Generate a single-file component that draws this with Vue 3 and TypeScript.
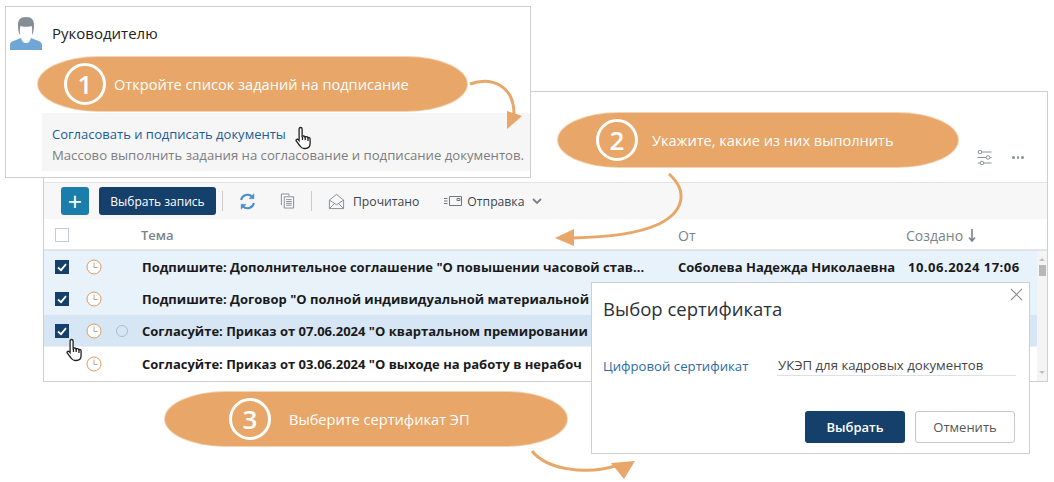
<script setup lang="ts">
interface Row { subject: string; from?: string; date?: string; state: string; dot?: boolean; checked: boolean }
const rows: Row[] = [
  { subject: 'Подпишите: Дополнительное соглашение "О повышении часовой став...', from: 'Соболева Надежда Николаевна', date: '10.06.2024 17:06', state: 'selected', checked: true },
  { subject: 'Подпишите: Договор "О полной индивидуальной материальной', state: 'selected', checked: true },
  { subject: 'Согласуйте: Приказ от 07.06.2024 "О квартальном премировании', state: 'active', dot: true, checked: true },
  { subject: 'Согласуйте: Приказ от 03.06.2024 "О выходе на работу в нерабоч', state: 'plain', checked: false },
]
const handPath = 'M5.500 1.500c1 0 1.600.7 1.600 1.600v7.200c.5-.4 2.600-.6 2.900.6.7-.5 2.400-.4 2.700.8.8-.4 2.400-.1 2.400 1.300v4.500c0 3-2 5-5 5H9c-2 0-3-1-4-2.500L1.200 15c-.7-1.100.8-2.400 1.900-1.400l1 1V3.100c0-.9.500-1.600 1.400-1.600z'
</script>

<template>
  <div class="canvas">
    <section class="win main">
      <div class="top-actions">
        <svg width="15" height="15" viewBox="0 0 15 15" fill="none" stroke="#8a949c" stroke-width="1">
          <path d="M1 2h13.500M.5 7.500h14M1 13h13.500" />
          <circle cx="3" cy="2" r="1.800" fill="#fff" />
          <circle cx="11" cy="7.500" r="1.800" fill="#fff" />
          <circle cx="5" cy="13" r="1.800" fill="#fff" />
        </svg>
        <span class="dots"><i></i><i></i><i></i></span>
      </div>
      <div class="toolbar">
        <button class="plus">+</button>
        <button class="pick">Выбрать запись</button>
        <span class="sep"></span>
        <svg class="refresh" width="17" height="17" viewBox="0 0 18 18" fill="none" stroke="#4a8fd0" stroke-width="2.200">
          <path d="M2.200 7.500A7 7 0 0 1 14 4" />
          <path d="M15.800 10.500A7 7 0 0 1 4 14" />
          <path d="M15.800 0.800v5.200h-5.200L15.800 .8z" fill="#4a8fd0" stroke-width="0.500" />
          <path d="M2.200 17.200v-5.200h5.200L2.200 17.200z" fill="#4a8fd0" stroke-width="0.500" />
        </svg>
        <svg class="copy" width="15" height="18" viewBox="0 0 16 18" fill="#fff" stroke="#7d878f" stroke-width="1">
          <path d="M1.500 13.500v-12h8v2" />
          <path d="M4.500 4.500h10v12h-10z" />
          <path d="M6.500 7.500h6M6.500 9.500h6M6.500 11.500h6M6.500 13.500h6" />
        </svg>
        <span class="sep second"></span>
        <svg class="env" width="17" height="17" viewBox="0 0 18 18" fill="none" stroke="#848c94" stroke-width="1">
          <path d="M1.500 7.500 9 1.500l7.500 6v9h-15z" />
          <path d="M1.500 7.500 9 12.500l7.500-5M1.500 16.500 7 11M16.500 16.500 11 11" />
        </svg>
        <span class="tool-label">Прочитано</span>
        <svg class="send" width="18" height="12" viewBox="0 0 18 12" fill="none" stroke="#6f7880" stroke-width="1">
          <path d="M5.500 1.500h12v9h-12zM0 3.500h3.500M0 6h3.500M0 8.500h3.500" />
          <path d="M13 3.500h3v2h-3z" />
        </svg>
        <span class="tool-label near">Отправка</span>
        <svg class="chev" width="10" height="7" viewBox="0 0 10 7" fill="none" stroke="#77808a" stroke-width="1.800"><path d="m1 1 4 4 4-4" /></svg>
      </div>
      <div class="grid-row head">
        <span class="cb"></span>
        <span></span>
        <span></span>
        <span class="theme">Тема</span>
        <span class="light">От</span>
        <span class="light created">Создано
          <svg width="8" height="13" viewBox="0 0 8 13" fill="none" stroke="#7b838a" stroke-width="1.600"><path d="M4 0v11M1 8.500 4 12l3-3.500" /></svg>
        </span>
      </div>
      <div class="body">
        <div class="list">
          <div v-for="r in rows" :key="r.subject" class="grid-row item" :class="r.state">
            <span v-if="r.checked" class="cb on">
              <svg width="14" height="14" viewBox="0 0 14 14" fill="none" stroke="#fff" stroke-width="1.800"><path d="m3 7.500 3 2.700 5-6" /></svg>
            </span>
            <span v-else></span>
            <svg width="16" height="16" viewBox="0 0 16 16" fill="none" stroke="#e09a5e" stroke-width="1">
              <circle cx="8" cy="8" r="7" fill="#fff" />
              <path d="M8 3.500V8.500h3.500" stroke="#a8a8a8" />
            </svg>
            <i v-if="r.dot" class="dot"></i>
            <span v-else></span>
            <span class="subject">{{ r.subject }}</span>
            <span class="bold">{{ r.from }}</span>
            <span class="bold date">{{ r.date }}</span>
          </div>
        </div>
        <div class="scroll">
          <span class="up"></span>
          <span class="thumb"></span>
          <span class="down"></span>
        </div>
      </div>
    </section>

    <section class="win first">
      <header class="person">
        <svg width="32" height="34" viewBox="0 0 32 34">
          <path d="M0 34v-5c0-3 3-4 6-5l5-2c1 3 2 5 5 5s4-2 5-5l5 2c3 1 6 2 6 5v5z" fill="#6fa6d6" />
          <path d="M9 14c0-4-.5-12 7-12s7 8 7 12c0 3-2 7-3 8-1 1.500-2.500 2-4 2s-3-.5-4-2c-1-1-3-5-3-8z" fill="#fff" />
          <path d="M16 1c-6 0-8 3-8 8 0 4 .5 8 2 10 0-3-.5-7 .5-9 1.500 1 9.500 1 11 0 1 2 .5 6 .5 9 1.500-2 2-6 2-10 0-5-2-8-8-8z" fill="#858e96" />
        </svg>
        <span>Руководителю</span>
      </header>
      <div class="hint">
        <a>Согласовать и подписать документы</a>
        <p>Массово выполнить задания на согласование и подписание документов.</p>
      </div>
    </section>

    <section class="win dialog">
      <svg class="close" width="13" height="13" viewBox="0 0 14 14" stroke="#8c8c8c" stroke-width="1.300"><path d="m1 1 12 12M13 1 1 13" /></svg>
      <h2>Выбор сертификата</h2>
      <div class="field">
        <label>Цифровой сертификат</label>
        <span class="value">УКЭП для кадровых документов</span>
      </div>
      <div class="actions">
        <button class="ok">Выбрать</button>
        <button class="cancel">Отменить</button>
      </div>
    </section>

    <div class="pill p1"><span class="num">1</span><span>Откройте список заданий на подписание</span></div>
    <div class="pill p2"><span class="num">2</span><span>Укажите, какие из них выполнить</span></div>
    <div class="pill p3"><span class="num">3</span><span>Выберите сертификат ЭП</span></div>

    <svg class="arrows" width="1054" height="482" viewBox="0 0 1054 482" fill="none" stroke="#e8a668" stroke-width="3">
      <path d="M470 84c22-8 44 2 44 30" />
      <path d="M507 111l15 5-15 13z" fill="#e8a668" stroke="none" />
      <path d="M669 174c20 18 14 38-10 50-22 10-50 13-86 14" />
      <path d="M555 238l19-9v17z" fill="#e8a668" stroke="none" />
      <path d="M532 451c14 18 54 25 86 14" />
      <path d="M635 461l-24 2 13 16z" fill="#e8a668" stroke="none" />
    </svg>

    <svg class="hand h1" width="18" height="24" viewBox="0 0 18 24" fill="#fff" stroke="#222" stroke-width="1.300">
      <path :d="handPath" />
      <path d="M7.500 11v3M10.200 11v3M13 12v3" />
    </svg>
    <svg class="hand h2" width="18" height="24" viewBox="0 0 18 24" fill="#fff" stroke="#222" stroke-width="1.300">
      <path :d="handPath" />
      <path d="M7.500 11v3M10.200 11v3M13 12v3" />
    </svg>
  </div>
</template>

<style>
html, body { margin: 0; background: #fff; }
</style>

<style scoped>
.canvas {
  position: relative;
  width: 1054px;
  height: 482px;
  overflow: hidden;
  background: #fff;
  font-family: "Open Sans", "Noto Sans", sans-serif;
  color: #222;
}
button { font-family: inherit; cursor: default; }
.win {
  position: absolute;
  box-sizing: border-box;
  background: #fff;
  border: 1px solid #cfcfcf;
}
.main {
  left: 43px;
  top: 91px;
  width: 1005px;
  height: 291px;
  display: flex;
  flex-direction: column;
}
.top-actions {
  height: 91px;
  flex: none;
  box-sizing: border-box;
  padding: 58px 23px 0 0;
  display: flex;
  justify-content: flex-end;
  align-items: flex-start;
  gap: 20px;
  border-bottom: 1px solid #e4e4e4;
}
.dots { display: flex; gap: 2px; margin-top: 6px; width: 12px; }
.dots i { width: 3px; height: 3px; border-radius: 50%; background: #8a949c; }
.toolbar {
  height: 36px;
  flex: none;
  background: #f7f7f7;
  display: flex;
  align-items: center;
  padding-left: 17px;
  font-size: 12.200px;
  color: #3b4650;
}
.plus {
  width: 28px;
  height: 28px;
  padding: 0;
  border: 0;
  border-radius: 3px;
  background: #1a7dab;
  color: #fff;
  font-size: 25px;
  line-height: 26px;
}
.pick {
  width: 117px;
  height: 28px;
  margin-left: 10px;
  padding: 0;
  border: 0;
  border-radius: 3px;
  background: #15406c;
  color: #fff;
  font-size: 12px;
}
.sep { width: 1px; height: 20px; background: #ccc; margin-left: 6px; }
.sep.second { margin-left: 16px; }
.refresh { margin-left: 16px; }
.copy { margin-left: 24px; }
.env { margin-left: 16px; }
.tool-label { margin-left: 8px; }
.tool-label.near { margin-left: 5px; }
.send { margin-left: 25px; }
.chev { margin-left: 8px; }
.grid-row {
  display: grid;
  grid-template-columns: 31px 30px 26px 536px 230px 1fr;
  align-items: center;
  padding-left: 11px;
}
.head {
  height: 32px;
  flex: none;
  padding-top: 2px;
  box-sizing: border-box;
  font-size: 13px;
  font-weight: 600;
  color: #7b838a;
  border-bottom: 2px solid #dfe5ea;
}
.theme { margin-left: -1px; }
.light { font-size: 14px; font-weight: 400; }
.created { display: flex; align-items: center; gap: 5px; margin-left: -2px; }
.cb {
  box-sizing: border-box;
  width: 14px;
  height: 14px;
  border: 1px solid #c3ccd4;
  background: #fff;
  display: block;
}
.cb.on { border: 0; background: #15406c; }
.cb.on svg { display: block; }
.body { display: flex; flex: 1; min-height: 0; }
.list { flex: 1; min-width: 0; }
.item {
  height: 32px;
  box-sizing: border-box;
  padding-top: 1px;
  font-size: 13px;
  border-bottom: 1px solid #eef1f3;
}
.item svg { display: block; }
.item.selected { background: #e7f2fb; }
.item.active { background: #d6e6f4; }
.item.plain { background: #fff; height: 33px; border-bottom: 0; }
.subject {
  font-weight: 700;
  white-space: nowrap;
  color: #1a1a1a;
}
.bold { font-weight: 700; white-space: nowrap; color: #1a1a1a; }
.date { letter-spacing: .5px; }
.dot {
  display: block;
  box-sizing: border-box;
  width: 12px;
  height: 12px;
  border: 1px solid #aebccc;
  border-radius: 50%;
}
.scroll {
  width: 10px;
  flex: none;
  background: #f4f4f4;
  display: flex;
  flex-direction: column;
  align-items: center;
  padding: 4px 0 4px;
  box-sizing: border-box;
}
.up, .down { width: 0; height: 0; border: 3px solid transparent; }
.up { border-bottom: 3px solid #c0c0c0; }
.down { border-top: 3px solid #c0c0c0; margin-top: auto; }
.thumb { width: 7px; height: 11px; background: #b8b8b8; margin-top: 4px; }

.first {
  left: 5px;
  top: 6px;
  width: 526px;
  height: 172px;
  padding-left: 5px;
}
.person {
  display: flex;
  align-items: center;
  gap: 10px;
  height: 45px;
  font-size: 15px;
  padding-top: 3px;
  box-sizing: content-box;
  margin-left: -1px;
  color: #222;
}
.hint {
  margin: 58px 0 0 31px;
  height: 58px;
  box-sizing: border-box;
  padding: 11px 0 0 10px;
  background: #f6f6f6;
  font-size: 13px;
  line-height: 20px;
}
.hint a { color: #1a5c97; }
.hint p { margin: 1px 0 0; color: #7d7d7d; white-space: nowrap; font-size: 13.150px; }

.dialog {
  left: 591px;
  top: 282px;
  width: 439px;
  height: 172px;
  padding: 0 11px;
  display: flex;
  flex-direction: column;
}
.close { position: absolute; right: 6px; top: 5px; }
h2 {
  margin: 12px 0 0;
  font-size: 18.500px;
  font-weight: 400;
  line-height: 28px;
  color: #2a3138;
}
.field {
  display: flex;
  align-items: flex-end;
  margin-top: 32px;
  font-size: 13.200px;
}
.field label { width: 174px; flex: none; color: #2c6ba5; line-height: 20px; }
.value {
  flex: 1;
  margin-right: 2px;
  padding: 0 0 0 1px;
  border-bottom: 1px solid #e0e0e0;
  line-height: 20px;
  color: #444;
}
.actions {
  display: flex;
  justify-content: flex-end;
  gap: 10px;
  margin-top: auto;
  margin-bottom: 10px;
  margin-right: 3px;
}
.actions button {
  width: 100px;
  height: 32px;
  padding: 0;
  border-radius: 3px;
  font-size: 13px;
}
.ok { background: #15406c; border: 0; color: #fff; font-weight: 600; }
.cancel { background: #fff; border: 1px solid #c8c8c8; color: #555; }

.pill {
  position: absolute;
  display: flex;
  align-items: center;
  box-sizing: border-box;
  height: 54px;
  border-radius: 60px / 27px;
  background: #e8a668;
  box-shadow: 0 0 0 1px #f3d4b6;
  color: #fff;
  font-size: 14.600px;
}
.num {
  box-sizing: border-box;
  width: 42px;
  height: 42px;
  border: 3px solid #fff;
  border-radius: 50%;
  display: flex;
  align-items: center;
  justify-content: center;
  font-size: 26px;
  font-weight: 600;
  flex: none;
}
.p1 { left: 38px; top: 57px; width: 429px; padding-left: 26px; gap: 8px; }
.p2 { left: 558px; top: 113px; width: 400px; padding-left: 38px; gap: 14px; }
.p3 { left: 165px; top: 392px; width: 402px; padding-left: 64px; gap: 18px; }

.arrows { position: absolute; left: 0; top: 0; pointer-events: none; }
.hand { position: absolute; }
.h1 { left: 295px; top: 126px; }
.h2 { left: 66px; top: 338px; }
</style>
